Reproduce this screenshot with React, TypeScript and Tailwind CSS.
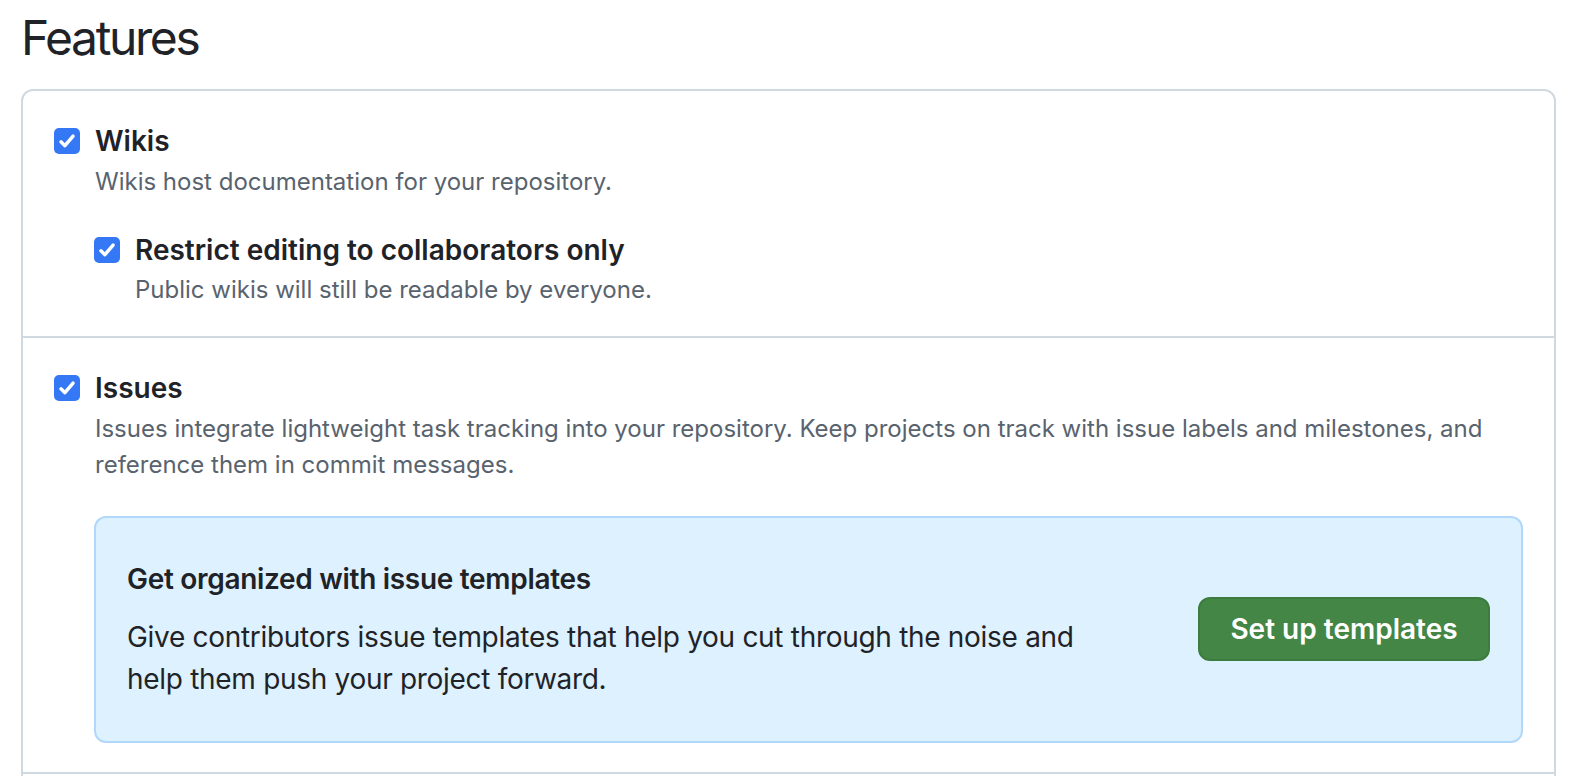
import React from "react";

const font = { fontFamily: 'Inter, "Noto Sans", "Liberation Sans", sans-serif' };

function Check({ className = "" }: { className?: string }) {
  return (
    <span
      className={`flex h-[26px] w-[26px] shrink-0 items-center justify-center rounded-[5px] bg-[#3478f6] ${className}`}
    >
      <svg width="22" height="22" viewBox="0 0 16 16" fill="none">
        <path
          d="M3.6 8.6 L6.5 11.4 L12.4 4.4"
          stroke="#ffffff"
          strokeWidth="2.5"
          strokeLinecap="round"
          strokeLinejoin="round"
        />
      </svg>
    </span>
  );
}

function Option({
  label,
  children,
}: {
  label: string;
  children?: React.ReactNode;
}) {
  return (
    <div>
      <div className="flex items-center gap-[15px]">
        <Check />
        <span className="text-[28px] font-semibold leading-[42px] text-[#1f2328]">
          {label}
        </span>
      </div>
      <div className="pl-[41px]">{children}</div>
    </div>
  );
}

export default function App() {
  return (
    <div className="min-h-screen bg-white pl-[21px] pr-[18px] pt-[8px]" style={font}>
      <h2 className="text-[48px] font-normal leading-[60px] tracking-[-2.4px] text-[#1f2328]">
        Features
      </h2>

      <div className="mt-[21px] rounded-[12px] border-2 border-[#d1d9e0]">
        {/* Wikis */}
        <section className="px-[31px] pb-[28px] pt-[29px]">
          <Option label="Wikis">
            <p className="mt-[2px] text-[24px] leading-[36px] text-[#59636e]">
              Wikis host documentation for your repository.
            </p>
            <div className="mt-[29px] -ml-[1px]">
              <Option label="Restrict editing to collaborators only">
                <p className="mt-[1px] text-[24px] leading-[36px] text-[#59636e]">
                  Public wikis will still be readable by everyone.
                </p>
              </Option>
            </div>
          </Option>
        </section>

        {/* Issues */}
        <section className="border-t-2 border-[#d1d9e0] px-[31px] pb-[29px] pt-[29px]">
          <Option label="Issues">
            <p className="mt-[2px] text-[24px] leading-[36px] text-[#59636e]">
              Issues integrate lightweight task tracking into your repository. Keep
              projects on track with issue labels and milestones, and reference them
              in commit messages.
            </p>
            <div className="mt-[33px] -ml-[1px] flex items-center justify-between rounded-[12px] border-2 border-[#b1d8fb] bg-[#ddf1fe] pb-[41px] pl-[31px] pr-[31px] pt-[40px]">
              <div className="max-w-[990px]">
                <h3 className="text-[28px] font-semibold leading-[42px] tracking-[-0.3px] text-[#1f2328]">
                  Get organized with issue templates
                </h3>
                <p className="mt-[16px] text-[28px] leading-[42px] tracking-[-0.3px] text-[#1f2328]">
                  Give contributors issue templates that help you cut through the noise
                  and help them push your project forward.
                </p>
              </div>
              <button className="flex h-[64px] w-[292px] shrink-0 items-center justify-center rounded-[12px] border-2 border-[#3d7c3f] bg-[#438645] text-[28px] font-semibold text-white">
                Set up templates
              </button>
            </div>
          </Option>
        </section>

        {/* next settings group */}
        <section className="h-[40px] border-t-2 border-[#d1d9e0]" />
      </div>
    </div>
  );
}
